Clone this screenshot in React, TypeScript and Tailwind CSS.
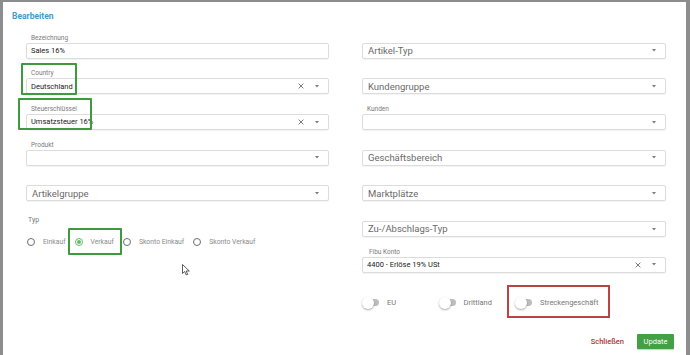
import React from 'react'

const font = { fontFamily: 'Roboto, "Liberation Sans", sans-serif' }

const Clear = () => (
  <svg width="6" height="6" viewBox="0 0 6 6" className="shrink-0">
    <path d="M0.6 0.6 L5.4 5.4 M5.4 0.6 L0.6 5.4" stroke="#6b6b6b" strokeWidth="0.9" />
  </svg>
)

const Caret = () => (
  <svg width="4" height="3" viewBox="0 0 4 3" className="shrink-0">
    <path d="M0 0 L4 0 L2 2.4 Z" fill="#7a7a7a" />
  </svg>
)

type FieldProps = {
  label?: string
  value?: string
  placeholder?: string
  clearable?: boolean
  noCaret?: boolean
  labelPad?: string
}

const Field: React.FC<FieldProps> = ({ label, value, placeholder, clearable, noCaret, labelPad = 'pl-[5px]' }) => (
  <div className="h-[35.7px] flex flex-col justify-end">
    {label && (
      <div className={`text-[6.5px] leading-[7px] text-[#7a7a7a] mb-[1px] ${labelPad}`}>{label}</div>
    )}
    <div className="h-[16px] border border-[#dcdcdc] rounded-[2px] shadow-[0_1px_1px_rgba(0,0,0,0.05)] flex items-center pl-[4px] pr-[9px] bg-white">
      {value ? (
        <span className="flex-1 text-[7.5px] text-[#222] leading-none">{value}</span>
      ) : placeholder ? (
        <span className="flex-1 pl-[1px] text-[9.5px] text-[#6a6a6a] leading-none">{placeholder}</span>
      ) : (
        <span className="flex-1" />
      )}
      {clearable && (
        <span className="mr-[11px] flex items-center">
          <Clear />
        </span>
      )}
      {!noCaret && <Caret />}
    </div>
  </div>
)

const Radio: React.FC<{ label: string; checked?: boolean }> = ({ label, checked }) => (
  <div className="flex items-center">
    <span
      className={`w-[8px] h-[8px] rounded-full border flex items-center justify-center ${
        checked ? 'border-[#66bb6a]' : 'border-[#6e6e6e]'
      }`}
    >
      {checked && <span className="w-[4px] h-[4px] rounded-full bg-[#66bb6a]" />}
    </span>
    <span className="ml-[8px] text-[6.8px] leading-none text-[#8a8a8a]">{label}</span>
  </div>
)

const Toggle: React.FC<{ label: string }> = ({ label }) => (
  <div className="w-[76.5px] flex items-center">
    <span className="relative w-[17px] h-[12px] flex items-center shrink-0">
      <span className="absolute left-[3px] right-0 h-[7px] rounded-full bg-[#bdbdbd]" />
      <span className="absolute left-0 w-[12px] h-[12px] rounded-full bg-white shadow-[0_1px_2px_rgba(0,0,0,0.35)]" />
    </span>
    <span className="ml-[8px] text-[7.5px] leading-none text-[#777]">{label}</span>
  </div>
)

export default function App() {
  return (
    <div className="w-[690px] h-[355px] bg-[#8d8d8d] pl-[3px] pt-[2px] pr-[4px] overflow-hidden" style={font}>
      <div className="relative h-full bg-white">
        <div className="h-[21px] pt-[9px] pl-[9px] text-[8.5px] leading-[10px] font-bold text-[#3e9cc6]">
          Bearbeiten
        </div>

        <div className="grid grid-cols-[303px_304px] gap-x-[33px] pl-[23px]">
          {/* linke Spalte */}
          <div className="flex flex-col">
            <Field label="Bezeichnung" value="Sales 16%" noCaret />
            <Field label="Country" value="Deutschland" clearable />
            <Field label="Steuerschlüssel" value="Umsatzsteuer 16%" clearable />
            <Field label="Produkt" />
            <Field placeholder="Artikelgruppe" />
            <div className="mt-[15px] pl-[2px] text-[7px] leading-[8px] text-[#7a7a7a]">Typ</div>
            <div className="mt-[12.5px] h-[10px] flex items-center gap-x-[9px] pl-[1px]">
              <Radio label="Einkauf" />
              <Radio label="Verkauf" checked />
              <Radio label="Skonto Einkauf" />
              <Radio label="Skonto Verkauf" />
            </div>
          </div>

          {/* rechte Spalte */}
          <div className="flex flex-col">
            <Field placeholder="Artikel-Typ" />
            <Field placeholder="Kundengruppe" />
            <Field label="Kunden" />
            <Field placeholder="Geschäftsbereich" />
            <Field placeholder="Marktplätze" />
            <Field placeholder="Zu-/Abschlags-Typ" />
            <Field label="Fibu Konto" value="4400 - Erlöse 19% USt" clearable labelPad="pl-[7px]" />
            <div className="mt-[24px] h-[12px] flex items-center">
              <Toggle label="EU" />
              <Toggle label="Drittland" />
              <Toggle label="Streckengeschäft" />
            </div>
          </div>
        </div>

        <div className="mt-[25.5px] flex justify-end items-center pr-[12px]">
          <span className="text-[7.5px] font-medium text-[#a93434] leading-none mr-[13px]">Schließen</span>
          <span className="w-[37px] h-[15px] flex items-center justify-center bg-[#43a047] rounded-[1px] text-white text-[7.5px] leading-none shadow-[0_1px_1px_rgba(0,0,0,0.2)]">
            Update
          </span>
        </div>

        {/* Markierungen */}
        <div className="absolute left-[18px] top-[61px] w-[56px] h-[32px] border-2 border-[#3f9a3f] rounded-[1px]" />
        <div className="absolute left-[15px] top-[96px] w-[74px] h-[32px] border-2 border-[#3f9a3f] rounded-[1px]" />
        <div className="absolute left-[65px] top-[226px] w-[54px] h-[27px] border-2 border-[#3f9a3f] rounded-[1px]" />
        <div className="absolute left-[504px] top-[283px] w-[103px] h-[33px] border-2 border-[#b94444]" />

        {/* Mauszeiger */}
        <svg className="absolute left-[179px] top-[262px]" width="9" height="12" viewBox="0 0 9 12">
          <path d="M0.5 0.5 L0.5 9.5 L2.7 7.5 L4.3 11 L5.7 10.4 L4.2 7 L7.3 7 Z" fill="white" stroke="#333" strokeWidth="0.8" />
        </svg>
      </div>
    </div>
  )
}
